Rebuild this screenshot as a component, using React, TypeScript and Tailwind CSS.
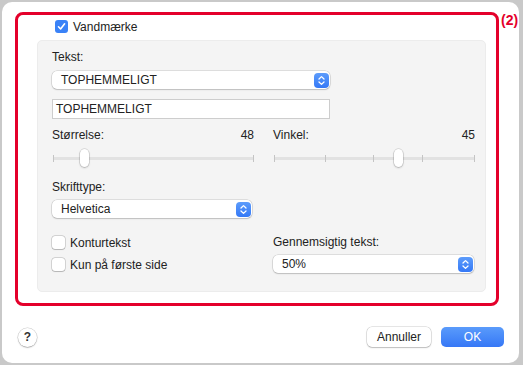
import React from "react";

const font = { fontFamily: '"Liberation Sans", Arial, sans-serif' };

function Stepper() {
  return (
    <div className="w-[15px] h-[15px] rounded-[4px] bg-gradient-to-b from-[#5d9cfb] to-[#3478f6] flex items-center justify-center">
      <svg width="9" height="11" viewBox="0 0 9 11" fill="none">
        <path d="M2 4 L4.5 1.6 L7 4" stroke="white" strokeWidth="1.3" strokeLinecap="round" strokeLinejoin="round" />
        <path d="M2 7 L4.5 9.4 L7 7" stroke="white" strokeWidth="1.3" strokeLinecap="round" strokeLinejoin="round" />
      </svg>
    </div>
  );
}

function Popup({ label, w }: { label: string; w: string }) {
  return (
    <div className={`${w} h-[18px] bg-white rounded-[5px] shadow-[0_0_0_0.5px_rgba(0,0,0,0.18),0_1px_1.5px_rgba(0,0,0,0.15)] flex items-center justify-between pl-[9px] pr-[1.5px]`}>
      <span className="text-[12px] text-[#222]">{label}</span>
      <Stepper />
    </div>
  );
}

function Box({ checked }: { checked?: boolean }) {
  if (checked)
    return (
      <div className="w-[13px] h-[13px] rounded-[3px] bg-[#3a82f7] flex items-center justify-center">
        <svg width="9" height="9" viewBox="0 0 9 9" fill="none">
          <path d="M1.5 4.8 L3.6 7 L7.6 1.8" stroke="white" strokeWidth="1.6" strokeLinecap="round" strokeLinejoin="round" />
        </svg>
      </div>
    );
  return <div className="w-[13px] h-[13px] rounded-[3px] bg-white shadow-[0_0_0_0.5px_rgba(0,0,0,0.25),0_0.5px_1px_rgba(0,0,0,0.15)]" />;
}

function Slider({ knob, ticks }: { knob: number; ticks: number[] }) {
  return (
    <div className="relative w-[201px] h-[18px]">
      <div className="absolute left-0 right-0 top-[8px] h-[3px] bg-[#e2e2e2] rounded-full" />
      {ticks.map((t) => (
        <div key={t} className="absolute top-[6px] w-[1px] h-[7px] bg-[#c4c4c4]" style={{ left: t }} />
      ))}
      <div
        className="absolute top-0 w-[9px] h-[18px] bg-white rounded-full shadow-[0_0_0_0.5px_rgba(0,0,0,0.2),0_1px_2px_rgba(0,0,0,0.2)]"
        style={{ left: knob }}
      />
    </div>
  );
}

export default function App() {
  return (
    <div className="w-[523px] h-[365px] bg-[#c9c9c9] pl-[2px] pt-[2px]" style={font}>
      <div className="relative w-[517px] h-[361px] bg-white rounded-[10px] flex flex-col">
        <div className="absolute left-[499px] top-[8px] text-[14px] font-bold text-[#e4002b]">(2)</div>
        <div className="ml-[13px] mt-[10px] w-[484px] h-[294px] border-[3px] border-[#e4002b] rounded-[8px] flex flex-col">
          <div className="flex items-center gap-[5px] ml-[37px] mt-[5px] h-[13px]">
            <Box checked />
            <span className="text-[12px] text-[#222]">Vandmærke</span>
          </div>
          <div className="ml-[19px] mt-[7px] w-[449px] h-[252px] bg-[#f4f4f4] rounded-[5px] border border-[#ececec] pl-[14px] pt-[9px] flex flex-col text-[12px] text-[#222]">
            <div className="leading-[14px]">Tekst:</div>
            <div className="mt-[7px]">
              <Popup label="TOPHEMMELIGT" w="w-[278px]" />
            </div>
            <div className="mt-[10px] w-[278px] h-[20px] bg-white border border-[#cdcdcd] flex items-center pl-[3px]">
              TOPHEMMELIGT
            </div>
            <div className="flex gap-[19px] mt-[9px]">
              <div className="w-[202px] flex flex-col">
                <div className="flex justify-between leading-[14px]">
                  <span>Størrelse:</span>
                  <span>48</span>
                </div>
                <div className="mt-[7px] ml-[1px]">
                  <Slider knob={27} ticks={[0, 200]} />
                </div>
                <div className="mt-[13px] leading-[14px]">Skrifttype:</div>
                <div className="mt-[6px]">
                  <Popup label="Helvetica" w="w-[200px]" />
                </div>
                <div className="mt-[18px] flex items-center gap-[5px] h-[13px]">
                  <Box />
                  <span>Konturtekst</span>
                </div>
                <div className="mt-[9px] flex items-center gap-[5px] h-[13px]">
                  <Box />
                  <span>Kun på første side</span>
                </div>
              </div>
              <div className="w-[202px] flex flex-col">
                <div className="flex justify-between leading-[14px]">
                  <span>Vinkel:</span>
                  <span>45</span>
                </div>
                <div className="mt-[7px] ml-[1px]">
                  <Slider knob={120} ticks={[0, 51, 99, 148, 200]} />
                </div>
                <div className="mt-[68px] leading-[14px]">Gennemsigtig tekst:</div>
                <div className="mt-[6px]">
                  <Popup label="50%" w="w-[201px]" />
                </div>
              </div>
            </div>
          </div>
        </div>
        <div className="flex items-center justify-between mt-[21px] ml-[16px] mr-[15px]">
          <div className="w-[19px] h-[19px] rounded-full bg-white shadow-[0_0_0_0.5px_rgba(0,0,0,0.2),0_1px_1.5px_rgba(0,0,0,0.2)] flex items-center justify-center text-[12px] font-bold text-[#333]">
            ?
          </div>
          <div className="flex gap-[10px]">
            <div className="w-[64px] h-[20px] rounded-[5px] bg-white shadow-[0_0_0_0.5px_rgba(0,0,0,0.2),0_1px_1.5px_rgba(0,0,0,0.18)] flex items-center justify-center text-[12px] text-[#222]">
              Annuller
            </div>
            <div className="w-[63px] h-[20px] rounded-[5px] bg-gradient-to-b from-[#5a9bfb] to-[#3677f6] flex items-center justify-center text-[12px] text-white">
              OK
            </div>
          </div>
        </div>
      </div>
    </div>
  );
}
